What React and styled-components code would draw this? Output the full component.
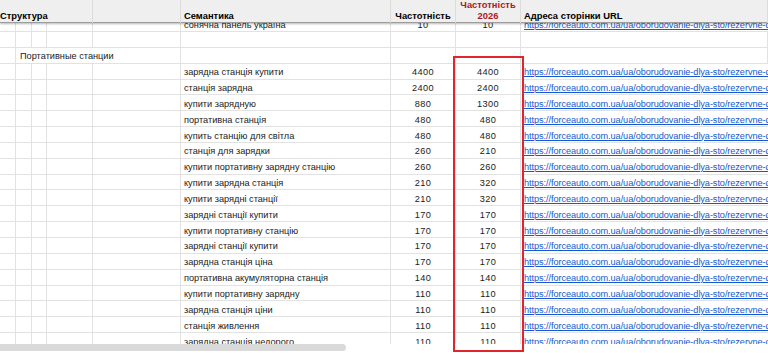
import React from 'react';
import styled, { createGlobalStyle } from 'styled-components';

const URL = 'https://forceauto.com.ua/ua/oborudovanie-dlya-sto/rezervne-dzherela-zhyvlennya/';
const ROW_H = 15.85;

const GlobalStyle = createGlobalStyle`
  html, body { margin: 0; padding: 0; background: #fff; }
  body {
    font-family: "Liberation Sans", Arial, sans-serif;
    font-size: 9.2px;
    color: #1a1a1a;
    overflow: hidden;
  }
`;

const Sheet = styled.div`
  position: relative;
  width: 768px;
  height: 353px;
  overflow: hidden;
  background: #fff;
`;

const HeaderRow = styled.div`
  position: relative;
  z-index: 2;
  display: grid;
  grid-template-columns: 93px 88px 210px 65px 65px 1fr;
  height: 22px;
  background: #efefef;
  border-bottom: 1px solid #9c9c9c;
  box-shadow: 0 1px 2px rgba(0, 0, 0, 0.28);
`;

const HeadCell = styled.div`
  display: flex;
  align-items: flex-end;
  justify-content: ${p => (p.$center ? 'center' : 'flex-start')};
  padding: 0 ${p => (p.$flush ? '0' : '3px')} 2px;
  border-right: 1px solid #dcdcdc;
  font-weight: bold;
  font-size: 9.4px;
  line-height: 10.5px;
  text-align: center;
  white-space: pre;
  overflow: visible;
  color: ${p => (p.$red ? '#b01820' : '#000')};
`;

const Body = styled.div`
  height: 321px;
  overflow: hidden;
`;

const Rows = styled.div`
  margin-top: ${16.15 - 23}px;
`;

const Row = styled.div`
  display: grid;
  grid-template-columns: 16px 16px 15px 46px 88px 210px 65px 65px 1fr;
  height: ${ROW_H}px;
`;

const Cell = styled.div`
  box-sizing: border-box;
  height: ${ROW_H}px;
  border-right: 1px solid #e2e2e2;
  border-bottom: 1px solid #e2e2e2;
  padding: 3.5px 3px 0;
  line-height: 11px;
  white-space: nowrap;
  overflow: ${p => (p.$overflow ? 'visible' : 'hidden')};
  text-align: ${p => (p.$center ? 'center' : 'left')};
  letter-spacing: ${p => (p.$center ? '0.35px' : '0')};
`;

const GroupCell = styled(Cell)`
  grid-column: 2 / 6;
  padding-left: 4px;
`;

const Link = styled.span`
  color: #1558cf;
  text-decoration: underline;
  letter-spacing: -0.08px;
`;

const Track = styled.div`
  height: 9px;
  background: #fff;
`;

const Thumb = styled.div`
  width: 346px;
  height: 7px;
  background: #dadada;
  border-radius: 0 4px 4px 0;
`;

const Highlight = styled.div`
  position: absolute;
  left: 453px;
  top: 56px;
  width: 71px;
  height: 296px;
  box-sizing: border-box;
  border: 2px solid #e0262c;
  pointer-events: none;
  z-index: 3;
`;

const data = [
  { sem: 'сонячна панель україна', f: '10', f26: '10', url: true },
  { empty: true },
  { group: 'Портативные станции' },
  { sem: 'зарядна станція купити', f: '4400', f26: '4400', url: true },
  { sem: 'станція зарядна', f: '2400', f26: '2400', url: true },
  { sem: 'купити зарядную', f: '880', f26: '1300', url: true },
  { sem: 'портативна станція', f: '480', f26: '480', url: true },
  { sem: 'купить станцію для світла', f: '480', f26: '480', url: true },
  { sem: 'станція для зарядки', f: '260', f26: '210', url: true },
  { sem: 'купити портативну зарядну станцію', f: '260', f26: '260', url: true },
  { sem: 'купити зарядна станція', f: '210', f26: '320', url: true },
  { sem: 'купити зарядні станції', f: '210', f26: '320', url: true },
  { sem: 'зарядні станції купити', f: '170', f26: '170', url: true },
  { sem: 'купити портативну станцію', f: '170', f26: '170', url: true },
  { sem: 'зарядні станції купити', f: '170', f26: '170', url: true },
  { sem: 'зарядна станція ціна', f: '170', f26: '170', url: true },
  { sem: 'портативна акумуляторна станція', f: '140', f26: '140', url: true },
  { sem: 'купити портативну зарядну', f: '110', f26: '110', url: true },
  { sem: 'зарядна станція ціни', f: '110', f26: '110', url: true },
  { sem: 'станція живлення', f: '110', f26: '110', url: true },
  { sem: 'зарядна станція недорого', f: '110', f26: '110', url: true },
];

function DataRow({ r }) {
  if (r.group) {
    return (
      <Row>
        <Cell />
        <GroupCell $overflow>{r.group}</GroupCell>
        <Cell />
        <Cell />
        <Cell />
        <Cell />
      </Row>
    );
  }
  return (
    <Row>
      <Cell />
      <Cell />
      <Cell />
      <Cell />
      <Cell />
      <Cell>{r.sem}</Cell>
      <Cell $center>{r.f}</Cell>
      <Cell $center>{r.f26}</Cell>
      <Cell $overflow>{r.url ? <Link>{URL}</Link> : null}</Cell>
    </Row>
  );
}

export default function App() {
  return (
    <>
      <GlobalStyle />
      <Sheet>
        <HeaderRow>
          <HeadCell $flush>Структура</HeadCell>
          <HeadCell />
          <HeadCell>Семантика</HeadCell>
          <HeadCell $center>Частотність</HeadCell>
          <HeadCell $center $red>{'Частотність\n2026'}</HeadCell>
          <HeadCell>Адреса сторінки URL</HeadCell>
        </HeaderRow>
        <Body>
          <Rows>
            {data.map((r, i) => (
              <DataRow key={i} r={r} />
            ))}
          </Rows>
        </Body>
        <Track>
          <Thumb />
        </Track>
        <Highlight />
      </Sheet>
    </>
  );
}
